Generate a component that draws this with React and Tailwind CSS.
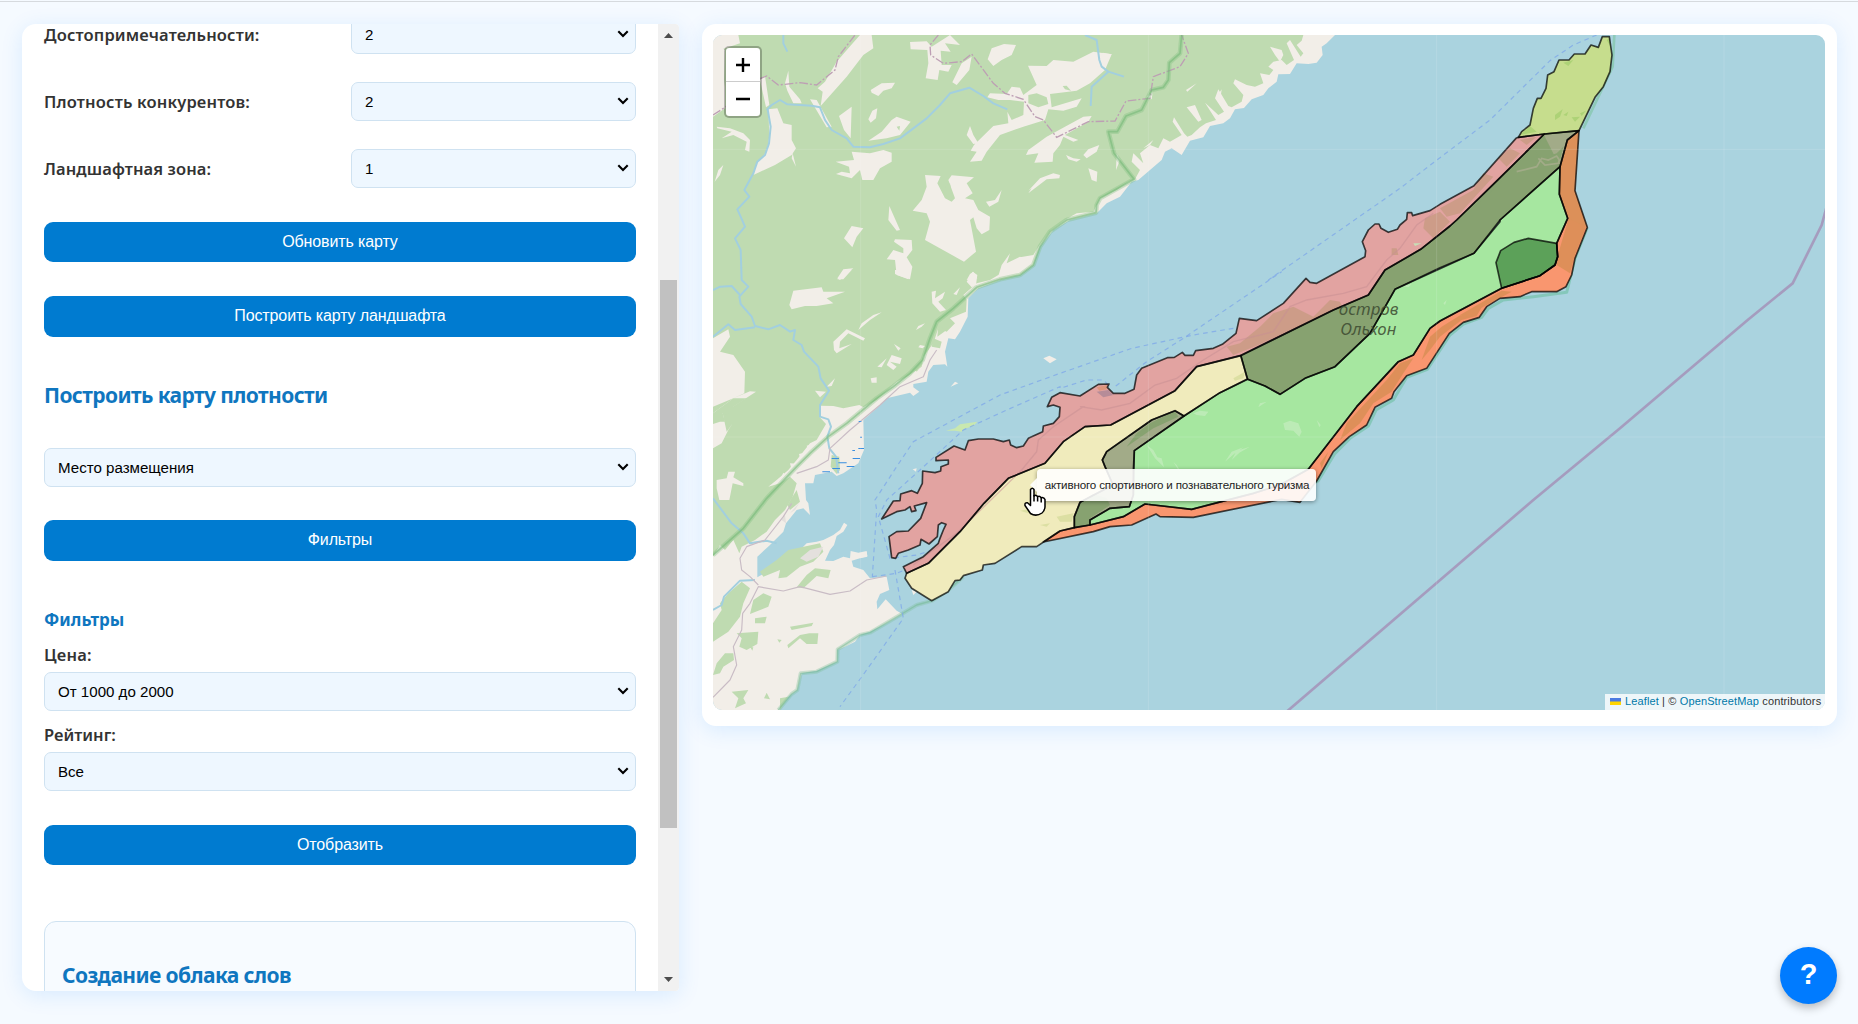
import React from "react";

const UI = "font-['Noto_Sans','Open_Sans',sans-serif]";
const ARIAL = "font-['Liberation_Sans',Arial,sans-serif]";

/* ---------- form controls ---------- */

function Select({ value, className = "" }) {
  return (
    <div
      className={`flex h-[39px] items-center justify-between rounded-[7px] border border-[#cfe2f1] bg-[#eef7ff] pl-[13px] pr-[6px] ${ARIAL} text-[15.100px] text-black ${className}`}
    >
      <span className="mt-px whitespace-nowrap">{value}</span>
      <svg width="12" height="8" viewBox="0 0 12 8" fill="none" className="-mt-px">
        <path d="M1.3 1.3 6 6l4.700-4.700" stroke="#000" strokeWidth="2.100" />
      </svg>
    </div>
  );
}

function Row({ label, spacing, value }) {
  return (
    <div className="flex h-[39px] items-center justify-between">
      <span className={`whitespace-nowrap ${UI} text-[16.5px] font-semibold leading-[20px] text-[#333] ${spacing}`}>{label}</span>
      <Select value={value} className="w-[285px]" />
    </div>
  );
}

function Action({ children, className = "" }) {
  return (
    <button
      className={`flex w-full items-center justify-center rounded-[9px] bg-[#007bd0] pb-px ${ARIAL} text-[16px] tracking-[-0.120px] text-white ${className}`}
    >
      {children}
    </button>
  );
}

function Scrollbar() {
  return (
    <div className="flex w-[21px] flex-none flex-col items-center bg-[#f1f1f1]">
      <svg width="9" height="5" viewBox="0 0 9 5" className="mt-[9px] flex-none">
        <path d="M0 5 4.500 0 9 5z" fill="#4d4d4d" />
      </svg>
      <div className="mt-[242px] h-[548px] w-[17px] flex-none bg-[#c1c1c1]" />
      <svg width="9" height="5" viewBox="0 0 9 5" className="mb-[9px] mt-auto flex-none">
        <path d="M0 0 4.500 5 9 0z" fill="#4d4d4d" />
      </svg>
    </div>
  );
}

/* ---------- map geometry ----------
   Points are grouped by map sheet; each sheet has its own origin. */

const SHEETS = {
  nw: [0, 0],
  n: [1200, 0],
  w: [0, 750],
  sw: [0, 1410],
  c: [480, 1050],
  e: [1500, 570],
  ne: [2220, 0],
  m: [1080, 750],
};

const line = (...parts) => {
  const pts = [];
  parts.forEach(([sheet, list]) => {
    const [dx, dy] = SHEETS[sheet];
    list.split(" ").forEach((p) => {
      const [x, y] = p.split(",").map(Number);
      pts.push(`${x + dx} ${y + dy}`);
    });
  });
  return "M" + pts.join("L");
};
const area = (...parts) => line(...parts) + "Z";
const areas = (sheet, ...lists) => lists.map((l) => area([sheet, l])).join("");

const LAND = area(
  ["n", "705,45 680,70 665,80 668,105 650,128 625,132 590,130 570,162 535,163 530,185 505,205 490,225 455,238 432,264 405,268 390,295 370,310 330,318 310,352 270,362 245,405 215,385 195,395 185,420 150,450 115,480 95,485 60,530 20,550 0,570"],
  ["nw", "1190,580 1110,600 1060,630 1020,680 1000,735 960,765 900,780"],
  ["w", "835,55 805,85 803,140 780,185 765,208 745,205 735,245 742,290 735,283 700,285 685,305 680,335 640,342 640,352 658,365 640,378 630,368 560,385 535,410 490,450 492,540 475,580 430,610 410,618 395,605 345,615 340,640 315,640 318,690"],
  ["sw", "325,40 330,75 310,55 290,60 258,100 250,125 210,165 172,200 172,262 210,240 250,205 300,180 320,160 350,155 370,150 400,135 420,120 432,98 442,105 430,125 410,138 402,165 390,180 375,212 400,213 430,200 450,205 452,183 475,188 500,183 502,198 470,208 455,212 460,230 490,240 510,265 560,260 568,300 540,312 530,335 532,358 557,328 590,362 607,372 560,400 510,425 480,435 465,455 435,470 412,480 412,515 350,542 305,550 292,600 265,620 235,665 39,665"],
  ["nw", "39,45"]
);

const FOREST = area(
  ["n", "610,45 605,62 590,75 610,100 602,110 570,60 560,70 582,120 560,135 545,120 520,125 505,140 520,150 508,165 480,160 490,190 465,200 440,195 405,178 400,190 430,225 425,245 395,262 385,258 355,208 345,235 372,275 355,285 315,248 348,300 318,310 300,322 275,345 262,350 252,340 222,292 218,305 245,345 210,365 190,355 175,385 150,375 120,400 130,430 100,400 95,425 120,450 105,478 85,485 50,510 0,535"],
  ["nw", "1190,555 1180,575 1130,580 1098,598 1050,632 1015,680 1000,705 960,712 940,745 900,762 870,780"],
  ["w", "830,40 790,75 800,90 798,125 750,145 765,160 740,185 715,175 700,220 670,260 665,290 620,320 590,335 530,390 490,412 478,405 430,415 400,408 362,407 358,440 378,462 350,510 330,520 290,570 265,600 230,630 205,650 240,640 270,620 290,640 275,690"],
  ["sw", "275,25 255,60 225,90 200,125 165,150 125,170 118,190 100,150 75,180 60,165 39,200"],
  ["w", "39,535 65,520 85,480 98,460 80,485 68,430 168,365 150,364 100,385 39,430 39,410 100,385 133,370 135,305 100,255 60,245 90,200 85,178 39,205"],
  ["nw", "39,290 75,265 75,200 60,90 120,70 115,45"]
);

const CLEARINGS_NW = areas(
  "nw",
  "39,60 60,80 75,90 72,195 39,275",
  "480,45 515,45 520,85 490,105 440,170 362,258 368,215 353,205 375,185 410,125 445,85",
  "630,66 680,64 695,80 750,45 780,75 735,70 752,95 722,92 725,135 755,135 745,155 718,150 713,180 677,175 685,130 682,90 632,88",
  "815,110 808,150 770,195 757,187 785,130",
  "875,85 912,72 948,75 935,105 905,120 880,138 863,118",
  "984,137 1040,138 1060,120 1120,125 1180,95 1235,103 1215,150 1170,190 1130,212 1050,222 1055,262 1145,235 1130,260 1090,272 1045,268 1035,300 970,320 900,345 860,395 845,422 810,425 830,395 812,392 822,375 880,318 925,310 922,275 935,300 970,285 972,245 930,240 895,240 862,232 870,220 920,222 935,200 960,203 970,225 1010,195",
  "512,210 545,190 585,188 575,205 550,212 535,228 515,218",
  "590,290 632,305 600,345 560,355 505,362 545,335 575,300",
  "532,265 528,295 512,308 505,298 517,272",
  "455,260 452,355 432,330 417,288",
  "265,152 268,200 300,238 305,250 280,250 262,212 255,190",
  "205,268 232,265 250,310 275,315 275,360 288,385 275,405 225,435 160,465 170,430 200,395 208,350",
  "195,168 208,255 198,262 180,180",
  "278,400 288,440 275,415",
  "330,238 350,240 395,320 380,322",
  "455,395 510,400 550,390 575,398 575,425 540,445 520,480 487,480 480,450 455,475 408,462 425,455 450,460 447,440 407,425 462,420",
  "675,465 722,468 712,490 735,535 755,545 765,535 745,480 755,466 822,472 800,490 818,520 795,535 820,540 835,570 870,590 868,630 845,643 830,625 820,592 810,600 828,695 792,725 675,660 690,605 680,580 638,572 665,540 680,500",
  "568,558 600,630 590,632 565,600",
  "455,618 490,625 470,650 457,682 432,655",
  "585,658 635,660 637,690 620,712 637,740 630,778 590,765 585,720 560,718 580,690 610,700 610,685 582,665",
  "810,318 820,345 835,370 820,372 800,345",
  "1175,288 1165,305 1095,345 1135,360 1120,365 1090,350 1080,375 1060,400 1058,425 1003,428 1015,400 978,405 985,390 1040,350 1150,290",
  "1198,375 1190,395 1160,415 1150,405 1165,388",
  "1098,405 1120,415 1142,418 1130,425 1105,418",
  "1165,445 1192,455 1190,485 1175,480",
  "1080,465 1078,475 1040,478 985,520 995,505 985,512 1020,475 1060,460",
  "905,510 895,545 868,560 858,545 885,540",
  "50,320 90,325 130,340 150,360 148,395 135,390 140,365 100,345 65,355 95,335 52,325",
  "70,435 60,465 44,485 55,450",
  "930,700 920,730 960,710 1000,735 960,765 895,768 905,735",
  "820,755 832,775 800,780 810,762",
  "460,745 435,765 420,780 412,775 430,748"
);

const CLEARINGS_W = areas(
  "w",
  "280,62 365,52 370,65 435,65 380,85 400,100 350,108 315,108 275,118 268,105",
  "400,215 440,178 495,205 490,212 445,190 420,215 418,235 455,222 410,250 402,240",
  "545,127 510,150 475,180 485,160 520,135",
  "695,65 708,62 705,85 735,65 728,85 715,95 738,120 720,125 697,100",
  "818,5 832,15 828,45 815,52 800,35",
  "585,0 630,0 625,28 605,20 585,12",
  "455,0 430,28 412,28 430,2",
  "780,52 770,75 760,72",
  "675,160 665,170 648,180 655,168",
  "582,222 602,235 595,242",
  "575,255 605,265 600,282 570,275 590,290 580,300 560,285",
  "560,265 545,292 532,290",
  "512,325 530,322 530,338 515,338",
  "345,362 378,365 360,382",
  "405,325 395,348 380,350",
  "660,225 675,228 668,235 655,232",
  "50,630 80,625 85,605 105,605 100,622 130,640 130,648 98,640 88,690 58,690 50,655",
  "250,608 262,620 235,640",
  "270,580 300,582 275,600",
  "297,552 325,545 300,565",
  "320,527 345,520 325,540"
);

const GROVES = areas(
  "sw",
  "85,310 125,275 150,295 130,340 120,380 85,425 39,455 39,400 65,360 60,340",
  "190,310 215,320 205,350 150,372 160,330",
  "165,385 200,380 195,400 165,400",
  "110,430 175,425 172,462 140,480 118,470 125,445",
  "265,180 360,160 370,185 340,215 300,230 260,262 235,265 240,240 190,260 180,245 230,210",
  "345,235 392,240 385,265 350,258 310,295 290,292 320,255",
  "290,0 300,35 270,60 262,45",
  "100,490 102,510 70,530 60,550 39,555 50,520 75,490",
  "328,430 355,430 352,462 320,462 300,445 265,475 262,465 300,435",
  "270,410 340,398 335,408 275,420",
  "200,608 210,628 192,625",
  "95,605 145,600 130,625 138,640 105,655 115,625",
  "45,400 75,385 60,410",
  "240,625 265,620 240,660",
  "232,448 245,450 238,458",
  "150,470 160,472 157,482"
) + areas(
  "w",
  "700,205 725,215 720,235 695,230",
  "715,168 740,180 712,200",
  "690,185 705,195 685,215",
  "640,290 670,280 650,305",
  "395,555 418,560 420,600 410,612 392,590"
);

const WETLAND = areas("w", "395,564 417,564 417,567 395,567", "415,577 440,577 440,580 415,580", "458,564 480,564 480,567 458,567", "475,534 492,534 492,537 475,537", "440,588 463,588 463,591 440,591", "397,594 420,594 420,597 397,597", "367,604 390,604 390,607 367,607", "457,540 465,540 465,543 457,543", "476,453 484,453 484,456 476,456", "480,500 486,500 486,503 480,503");

const RIVERS = [
  line(["nw", "200,270 215,255 240,240 262,253 335,257 360,262 375,300 395,330 440,355 460,380 510,382 550,372 600,355 640,325 680,295 720,255 750,220 808,203 850,228 880,250 922,268"]),
  line(["nw", "203,268 212,320 207,370 195,405 172,425 160,460 133,510 148,530 112,568 122,590 135,620 105,655 122,690 125,780"], ["w", "145,50 118,80 122,102 155,140 165,168 205,178 240,165 270,185 285,180 280,210 305,225 312,245 355,290 362,325 387,362 360,405 360,440 385,448 393,470 382,500 388,535 408,560 415,610"]),
  line(["w", "39,60 60,50 95,48 120,75"]),
  line(["w", "39,200 85,163 105,180 165,172"]),
  line(["nw", "250,45 250,70 262,95"]),
  line(["nw", "1155,45 1190,60 1198,120 1205,140 1225,155 1272,170"]),
  line(["nw", "1225,155 1175,200 1172,258"]),
  line(["sw", "39,25 95,100 130,130 150,160 200,152 230,160"]),
  line(["sw", "39,360 65,345 72,320 120,272 165,270"]),
];

const RIDGE = line(["n", "245,45 240,100 208,128 205,180 190,202 155,210 125,270 78,288 52,335 25,335 42,400 102,478 0,535"], ["nw", "1190,555 1188,578 1100,600 1050,635 1020,680 1000,735 960,765 900,778"], ["w", "830,52 760,115 710,155 690,205 668,270 630,310 580,350 530,385 440,460 385,500 330,550 290,590 200,685"], ["sw", "130,115 39,195"]);
const SHORE_SOUTH = line(["sw", "235,660 275,612 292,600 302,550 350,545 412,515 413,478 480,435 510,428 600,375 650,345 697,332 745,300 790,260"]);
const SHORE_EAST = line(["e", "325,830 355,812 405,730 450,685 505,648 528,600 580,570 620,502 682,478 750,375 790,342 845,322 865,295 910,270 1000,260 1100,247 1108,215"], ["ne", "405,715 442,622"]);
const BOUNDARY = [
  line(["nw", "39,285 75,262 170,180 200,168 235,195 300,188 350,195 405,150 415,110 465,45"]),
  line(["nw", "715,45 690,75 692,105 730,130 785,125 815,102 880,190 915,220 970,238 1005,290 1030,300 1070,352 1165,305 1245,303"], ["n", "45,303 78,243 150,235 160,170 240,140 265,100 245,45"]),
];
const ROADS = [
  line(["sw", "39,622 90,570 110,525 100,470 125,420 128,370 150,340 175,290 250,303 300,290 390,313 450,303 500,270 560,258"]),
  line(["w", "290,610 350,590 385,570 390,535 450,480 540,405 600,350 670,320 690,270 710,240"]),
  line(["sw", "175,285 150,260 125,240 120,205 140,170 195,150 250,80 275,40"]),
];
const ISLAND_ROADS = line(["sw", "640,225 700,180 770,130"], ["w", "965,600 1010,545 1015,510 1060,470 1150,410"], ["m", "60,410 125,420 210,400 285,345 350,325 430,270 520,215 640,185"], ["e", "270,290 320,270 430,250 500,230 560,150 600,115 650,45 700,10"]);
const FERRIES = [
  line(["ne", "470,45 400,75 330,122 150,300 0,413"], ["n", "900,505 505,780"], ["m", "665,5 370,205 260,275 165,350"]),
  line(["m", "520,175 400,195 215,235 0,310"], ["w", "1080,310 900,375 640,515 590,590 525,690"], ["sw", "530,60 517,260"]),
  line(["m", "145,345 130,330 80,330 0,355"], ["w", "1080,350 920,420 790,480 660,600 560,690"], ["sw", "535,80 570,205 650,195 700,180"]),
  line(["sw", "517,260 590,250 640,230"]),
  line(["sw", "585,240 610,385 500,540 420,650"]),
];
const SEA_BORDER = line(["ne", "1160,560 1145,615 1058,790 923,900"], ["e", "1260,655 1000,870"], ["sw", "1760,665"]);

const ZONES = [
  ["#e2a3a1", area(
    ["ne", "235,352 228,355 102,497 0,553"],
    ["e", "690,2 638,17 635,8 622,8 620,28 600,45 592,58 565,67 543,55 537,42 525,42 505,60 487,95 497,122 495,140 350,220 330,217 318,205 250,280 170,332 118,325"],
    ["m", "528,190 487,223 460,235 407,242 400,256 375,256 367,247 343,262 322,263 245,295 230,315 222,358 195,370 160,370 142,352 147,342 115,343 60,378 0,368"],
    ["c", "575,82 562,110 580,105 600,112 598,140 580,160 550,168 548,185 505,205 490,228 470,233 452,225 448,210 430,215 400,207 355,207 325,212 315,240 282,228 228,262 228,272 265,270 265,282 243,290 242,303 225,308 188,303 187,340 172,370 155,362 122,372 120,392 100,393 65,447 110,425 135,420 150,410 155,425 168,422 163,408 200,398 182,445 145,483 110,485 87,500 95,563 107,565 115,550 145,540 180,525 183,508 207,522 232,500 235,465 245,458 258,463 250,480 240,505 235,520 190,560 130,590 140,610 205,580 300,485 372,400 445,325 555,280 610,215 675,170 752,165 945,62"],
    ["m", "410,290 540,257"],
    ["e", "400,300 505,255 555,180 662,118 750,48"],
    ["ne", "50,600 175,478 313,342"]
  )],
  ["#f0ebbc", area(
    ["c", "140,610 205,580 300,485 372,400 445,325 555,280 610,215 675,170 752,165 945,62"],
    ["m", "410,290 543,257 562,327"],
    ["c", "1080,68 972,138 945,122 875,150 740,245 727,270 735,290 757,340 740,355 660,397 643,440 643,473 600,483 530,530 485,530 405,580 370,585 367,600 310,617 300,630 285,632 265,665 215,692 155,655 135,625"]
  )],
  ["#a2ab88", area(["c", "945,122 972,138 823,242 820,300 820,375 808,410 750,415 690,450 690,465 643,473 643,440 660,397 740,355 757,340 735,290 727,270 740,245 875,150"])],
  ["#87a270", area(
    ["e", "122,437 400,300 505,255 555,180 662,118 750,48"],
    ["ne", "50,600 175,478 313,342 417,332 382,360 360,440 180,600 102,700 0,743"],
    ["e", "585,238 510,370 405,470 315,505 240,553 195,528 143,508"]
  )],
  ["#a6e7a0", area(
    ["ne", "360,440 358,523 383,595 350,670 353,710 345,735 300,767 185,805 0,903"],
    ["e", "690,355 640,435 595,455 470,590 325,778"],
    ["c", "1260,345 1180,370 995,418 855,402 790,440 690,465 690,450 750,415 808,410 820,375 823,242 972,138 1080,68"],
    ["e", "143,508 195,528 240,553 315,505 405,470 510,370 585,238 822,130 900,35"],
    ["ne", "180,600"]
  )],
  ["#5ca159", area(["ne", "350,670 265,655 222,667 182,692 168,728 185,805 300,767 345,735 353,710"])],
  ["#f9966f", area(
    ["ne", "417,332 405,512 442,622 405,715 395,765 378,800 350,815 275,815 240,830 180,835"],
    ["e", "860,290 838,322 790,337 748,370 680,475 620,497 582,545 575,565 525,592 500,645 448,680 400,725 350,813"],
    ["c", "1320,397 1265,388 1000,442 900,440 888,432 815,465 750,470 700,485 550,516 600,483 643,473 690,465 790,440 855,402 995,418 1180,370 1260,345"],
    ["e", "325,778 470,590 595,455 640,435 690,355"],
    ["ne", "0,903 185,805 300,767 345,735 353,710 350,670 383,595 358,523 360,440 382,360"]
  )],
  ["#c6dd8d", area(["ne", "235,352 245,335 270,315 280,265 292,235 303,235 318,205 323,165 342,155 357,120 387,120 403,102 435,102 453,75 475,82 487,50 508,50 516,105 510,155 490,200 465,232 417,332 313,342"])],
];

const PINK_WOODS = areas("e", "180,350 220,310 280,290 340,320 390,270 420,275 425,288 250,370 175,405 100,435 80,410 120,400", "675,25 720,5 750,35 700,85 670,55", "575,115 590,115 595,135 575,135") +
  areas("ne", "0,565 100,510 130,460 160,470 60,580 20,590", "175,415 210,385 240,400 200,440", "240,360 290,350 260,375");
const ORANGE_WOODS = areas("ne", "375,370 412,350 402,512 438,622 405,705 390,760 350,735 358,690 386,595 362,523 365,440", "60,885 185,812 215,815 130,860 90,888") +
  areas("e", "790,310 855,275 830,318 785,330 720,380 690,420 665,450 690,380 725,350", "560,510 600,460 640,445 610,490 575,545 520,580 480,640 420,690 440,640", "360,760 385,725 365,775");
const OLIVE_WOODS = areas("ne", "312,350 285,390 300,420 280,450 220,450 180,490 50,610 0,660 0,735 100,695 180,595 355,442 370,380 350,400 335,405");
const PALE_SPOTS = areas("c", "1270,160 1290,152 1315,160 1325,185 1318,200 1300,182 1275,180", "860,225 880,240 892,262 905,265 912,292 885,265", "940,275 950,285 965,310 955,300", "1000,130 1020,122 1045,125 1035,138 1010,135", "1095,275 1115,245 1150,232 1122,252", "1370,150 1382,165 1378,172") +
  areas("e", "605,228 635,222 625,232", "740,270 735,285 730,280", "640,100 665,100 645,108", "95,750 110,722 150,710 118,728", "180,580 200,575 175,592");
const TIP_WOODS = areas("ne", "345,300 345,285 368,268 360,290", "370,285 385,275 380,288", "395,292 420,290 405,305", "240,345 270,318 290,335", "370,128 400,120 385,138", "500,60 508,55 512,80", "420,280 438,272 425,288");
const YELLOW_WOODS = areas("c", "590,440 640,430 635,455 600,455", "480,422 520,415 525,430 500,428", "1120,25 1155,5 1150,25 1125,32", "540,465 570,460 560,470");

function OlkhonMap() {
  return (
    <svg width="1112" height="675" viewBox="39 45 3336 2025" className="block h-[675px] w-[1112px]" preserveAspectRatio="none">
      <rect x="39" y="45" width="3336" height="2025" fill="#aad3df" />
      <path d={LAND} fill="#f2eee8" />
      <path d={FOREST} fill="#bfdbb1" />
      <path d={CLEARINGS_NW} fill="#f2eee8" />
      <path d={CLEARINGS_W} fill="#f2eee8" />
      <path d={areas("nw", "985,225 1010,220 1040,232 1045,252 1015,262 985,250", "1088,198 1100,197 1113,212 1095,208", "735,500 750,490 755,520 742,525", "590,320 600,318 598,332")} fill="#bfdbb1" />
      <path d={areas("w", "39,430 100,385 140,385 100,410 80,435 68,430 75,455 60,455 39,462")} fill="#bfdbb1" />
      <path d={GROVES} fill="#bfdbb1" />
      <path d={areas("n", "510,80 545,90 550,105 540,125 525,105", "260,262 285,255 305,300 295,305", "365,208 350,230 360,245", "140,230 158,215 155,238", "290,190 262,215 258,210", "160,360 150,375 130,385", "50,400 60,420 48,450", "8,98 35,103 0,160 -10,150")} fill="#f2eee8" />
      <path d={areas("sw", "330,180 370,170 355,200 320,215 300,205", "258,100 245,90 255,75", "300,35 285,60 270,70")} fill="#e4e0dd" />
      <path d={areas("w", "1030,265 1048,257 1070,268 1050,280", "752,350 765,335 775,340", "638,598 650,595 648,605") + areas("sw", "500,185 502,200 480,205", "635,300 650,305 640,315")} fill="#f2eee8" />
      <path d={areas("w", "738,482 765,475 780,463 832,455 820,468 790,478 785,485 765,482")} fill="#c9e8b0" />

      <g fill="none" strokeWidth="6" strokeLinejoin="round">
        {RIVERS.map((d) => <path key={d} d={d} stroke="#a2cfdf" />)}
      </g>
      <g fill="none" stroke="#c9bcc5" strokeWidth="3.500" strokeLinejoin="round">
        {ROADS.map((d) => <path key={d} d={d} />)}
      </g>
      <g fill="none" stroke="#bd9fb4" strokeWidth="4" strokeDasharray="26 6 6 6">
        {BOUNDARY.map((d) => <path key={d} d={d} />)}
      </g>
      <g fill="none" strokeLinejoin="round">
        <path d={RIDGE} stroke="#7dc07f" strokeOpacity="0.350" strokeWidth="14" />
        <path d={RIDGE} stroke="#6db571" strokeOpacity="0.500" strokeWidth="5" />
        <path d={SHORE_SOUTH} stroke="#7dc09b" strokeOpacity="0.350" strokeWidth="12" />
        <path d={SHORE_SOUTH} stroke="#6fb58c" strokeOpacity="0.450" strokeWidth="4" />
        <path d={SHORE_EAST} stroke="#7cc4b0" strokeOpacity="0.800" strokeWidth="9" />
        <path d={line(["ne", "523,45 518,140 430,325"])} stroke="#7cc4a0" strokeOpacity="0.600" strokeWidth="8" />
      </g>
      <path d={WETLAND} fill="#3a8ee0" />
      <g fill="none" stroke="#7fa9e8" strokeOpacity="0.800" strokeWidth="3.500" strokeDasharray="14 12">
        {FERRIES.map((d) => <path key={d} d={d} />)}
      </g>
      <path d={SEA_BORDER} fill="none" stroke="#a492b8" strokeOpacity="0.850" strokeWidth="8" />

      {ZONES.map(([color, d]) => <path key={color} d={d} fill={color} />)}
      <path d={PINK_WOODS} fill="#c69a80" opacity="0.750" />
      <path d={ISLAND_ROADS} fill="none" stroke="#c98f93" strokeWidth="4" opacity="0.550" />
      <path d={areas("w", "1190,365 1225,360 1240,375 1210,382")} fill="#b68c98" />
      <path d={areas("w", "1190,352 1222,345 1220,358 1198,362")} fill="#dd957c" />
      <path d={ORANGE_WOODS} fill="#d98e56" opacity="0.850" />
      <path d={areas("ne", "415,335 382,362 365,440 350,420 312,345")} fill="#a2ab88" />
      <path d={area(["ne", "417,332 382,360 360,440 358,523 383,595 442,622 405,512"])} fill="#dc9059" />
      <path d={OLIVE_WOODS} fill="#87a270" />
      <path d={line(["ne", "230,455 290,440 305,415 325,420 350,408 358,420"], ["ne", "355,430 315,435 295,415"])} fill="none" stroke="#a2ab88" strokeWidth="5" />
      <path d={areas("c", "660,397 700,372 740,385 750,405 690,445 690,465 643,473 643,440", "920,135 945,125 955,140 880,175 800,230 830,190 870,160")} fill="#87a270" />
      <path d={PALE_SPOTS} fill="#c2ecbc" opacity="0.800" />
      <path d={TIP_WOODS} fill="#a6cf71" opacity="0.800" />
      <path d={YELLOW_WOODS} fill="#d9dea0" opacity="0.900" />
      <g fill="none" stroke="#000" strokeOpacity="0.720" strokeWidth="5" strokeLinejoin="round">
        {ZONES.map(([color, d]) => <path key={color} d={d} />)}
      </g>

      <g stroke="#fff" strokeOpacity="0.200" strokeWidth="2">
        <path d="M482 45V2070M1345 45V2070M2210 45V2070M3072 45V2070M39 388H3375M39 1251H3375" />
      </g>
      <g fill="#3c4a30" fillOpacity="0.850" fontFamily="'Noto Sans','Open Sans',sans-serif" fontStyle="italic" fontSize="49">
        <text x="1916" y="884" textLength="180" lengthAdjust="spacingAndGlyphs">остров</text>
        <text x="1921" y="944" textLength="168" lengthAdjust="spacingAndGlyphs">Ольхон</text>
      </g>
    </svg>
  );
}

function ZoomControl() {
  return (
    <div className="absolute left-[11px] top-[11px] flex w-[38px] flex-col rounded-[5px] border-2 border-black/25 bg-white bg-clip-padding">
      <button className="flex h-[34px] items-center justify-center border-b border-[#ccc]">
        <svg width="14" height="14" viewBox="0 0 14 14"><path d="M0 7H14M7 0V14" stroke="#000" strokeWidth="2.400" /></svg>
      </button>
      <button className="flex h-[34px] items-center justify-center">
        <svg width="14" height="14" viewBox="0 0 14 14"><path d="M0 7H14" stroke="#000" strokeWidth="2.400" /></svg>
      </button>
    </div>
  );
}

function ZoneTooltip() {
  return (
    <div className={`absolute left-[324px] top-[434px] flex h-[32px] w-[279px] items-center justify-center rounded-[4px] bg-white/90 pl-px shadow-[0_1px_4px_rgba(0,0,0,0.4)] ${ARIAL} whitespace-nowrap text-[11.600px] tracking-[-0.160px] text-[#222]`}>
      активного спортивного и познавательного туризма
      <span className="absolute -left-[7px] top-[9px] border-y-[7px] border-r-[7px] border-y-transparent border-r-white/90" />
    </div>
  );
}

function Pointer() {
  return (
    <svg className="absolute left-[311px] top-[452px]" width="22" height="30" viewBox="0 0 22 30">
      <path
        d="M6.500 2.500Q8.300 0 10 2.500V9Q12.300 7.500 13.600 9.600Q15.800 8.500 17 10.600Q20 9.800 21 12.500V20Q20.500 24 18 26Q12 30 6.500 26.500L1 18.500Q.5 15.500 3.500 15.800L6.500 18.500Z"
        fill="#fff" stroke="#000" strokeWidth="1.500" strokeLinejoin="round"
      />
      <path d="M10 8v6.500M13.600 9.500v5M17.200 10.500v5" stroke="#000" strokeWidth="1.500" />
    </svg>
  );
}

function Attribution() {
  return (
    <div className={`absolute bottom-0 right-0 flex h-[16px] w-[220px] items-center whitespace-nowrap bg-white/80 pb-px pl-[5px] ${ARIAL} text-[11px] tracking-[0.130px] text-[#333]`}>
      <svg width="11" height="7" viewBox="0 0 11 7" className="mr-[4px] flex-none">
        <path fill="#4c7be1" d="M0 0h11v4H0z" /><path fill="#ffd500" d="M0 3.500h11V7H0z" />
      </svg>
      <span className="whitespace-pre"><span className="text-[#0078a8]">Leaflet</span> | © <span className="text-[#0078a8]">OpenStreetMap</span> contributors</span>
    </div>
  );
}

export default function App() {
  return (
    <div className="relative flex h-[1024px] w-[1858px] items-start overflow-hidden bg-[#f5faff] pl-[22px] pt-[24px] before:absolute before:inset-x-0 before:top-px before:h-px before:bg-[#d6dade]">
      <aside className="flex h-[967px] w-[657px] flex-none overflow-hidden rounded-l-[14px] rounded-r-[4px] bg-white shadow-[0_4px_22px_rgba(0,123,255,0.12)]">
        <div className="w-[636px] flex-none overflow-hidden px-[22px]">
          <div className="-mt-[9px] flex flex-col gap-[28px]">
            <Row label="Достопримечательности:" spacing="tracking-[0.150px]" value="2" />
            <Row label="Плотность конкурентов:" spacing="tracking-[0.160px]" value="2" />
            <Row label="Ландшафтная зона:" spacing="tracking-[0.100px]" value="1" />
          </div>
          <Action className="mt-[34px] h-[40px]">Обновить карту</Action>
          <Action className="mt-[34px] h-[41px]">Построить карту ландшафта</Action>
          <h2 className={`mt-[43px] h-[30px] whitespace-nowrap ${UI} text-[21px] font-bold leading-[30px] tracking-[-0.600px] text-[#0f76bf]`}>Построить карту плотности</h2>
          <Select value="Место размещения" className="mt-[38px]" />
          <Action className="mt-[33px] h-[41px]">Фильтры</Action>
          <h3 className={`mt-[47px] h-[24px] ${UI} text-[17px] font-bold leading-[24px] text-[#0f76bf]`}>Фильтры</h3>
          <p className={`mt-[11px] h-[24px] ${UI} text-[16.500px] font-semibold leading-[24px] tracking-[0.200px] text-[#333]`}>Цена:</p>
          <Select value="От 1000 до 2000" className="mt-[5px]" />
          <p className={`mt-[12px] h-[24px] ${UI} text-[16.500px] font-semibold leading-[24px] text-[#333]`}>Рейтинг:</p>
          <Select value="Все" className="mt-[5px]" />
          <Action className="mt-[34px] h-[40px]">Отобразить</Action>
          <section className="mt-[56px] h-[120px] rounded-[12px] border border-[#cfe2f1] bg-[#f7fbff] px-[17px] pt-[38px]">
            <h2 className={`whitespace-nowrap ${UI} text-[21px] font-bold leading-[30px] tracking-[-0.600px] text-[#0f76bf]`}>Создание облака слов</h2>
          </section>
        </div>
        <Scrollbar />
      </aside>

      <main className="ml-[23px] h-[702px] w-[1135px] flex-none rounded-[14px] bg-white px-[11px] pt-[11px] shadow-[0_4px_22px_rgba(0,123,255,0.12)]">
        <div className="relative h-[675px] w-[1112px] overflow-hidden rounded-[9px]">
          <OlkhonMap />
          <ZoomControl />
          <ZoneTooltip />
          <Pointer />
          <Attribution />
        </div>
      </main>

      <button className={`absolute left-[1780px] top-[947px] flex h-[57px] w-[57px] items-center justify-center rounded-full bg-[#007bff] pb-px ${ARIAL} text-[29px] font-bold text-white shadow-[0_4px_9px_rgba(0,0,0,0.25)]`}>
        ?
      </button>
    </div>
  );
}
